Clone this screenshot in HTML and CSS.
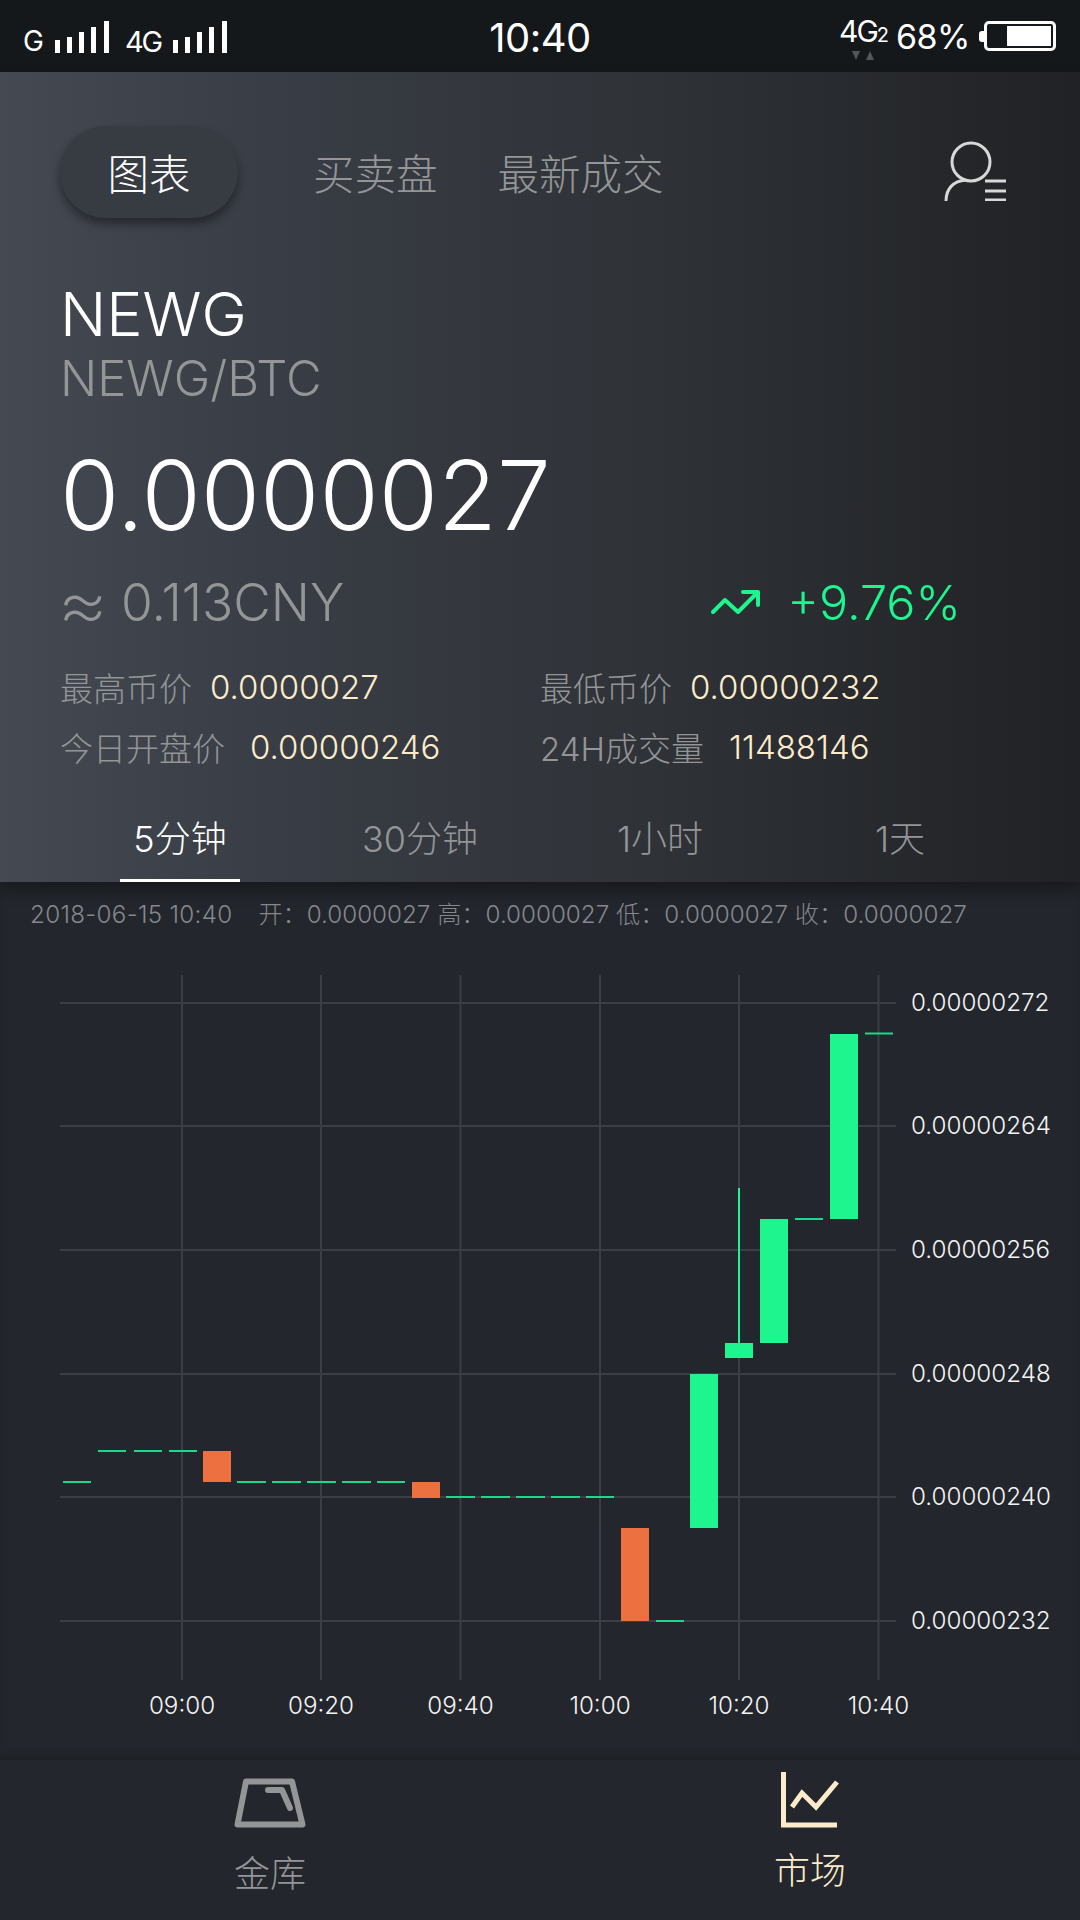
FILE: index.html
```html
<!DOCTYPE html>
<html lang="zh-CN">
<head>
    <meta charset="UTF-8">
    <meta name="viewport" content="width=device-width, initial-scale=1.0">
    <title>NEWG</title>
    <link rel="stylesheet" href="styles.css">
</head>
<body>
    <div class="status-bar">
        <div class="status-left">
            <span class="net">G</span>
            <svg class="signal" width="54" height="32" viewBox="0 0 54 32"><path d="M2.500 32V19M14.500 32V16M26.500 32V11M38.500 32V6M51.500 32V0"/></svg>
            <span class="net net-4g">4G</span>
            <svg class="signal" width="54" height="32" viewBox="0 0 54 32"><path d="M2.500 32V19M14.500 32V16M26.500 32V11M38.500 32V6M51.500 32V0"/></svg>
        </div>
        <div class="status-time">10:40</div>
        <div class="status-right">
            <div class="dual-sim">
                <span class="sim-text">4G<small>2</small></span>
                <svg class="sim-arrows" width="24" height="9" viewBox="0 0 24 9"><path d="M1 0h8l-4 9zM15 9l4-9 4 9z"/></svg>
            </div>
            <span class="battery-pct">68%</span>
            <span class="battery-tip"></span>
            <span class="battery"><span class="battery-fill"></span></span>
        </div>
    </div>

    <header class="market-head">
        <nav class="top-tabs">
            <a class="top-tab active">图表</a>
            <a class="top-tab">买卖盘</a>
            <a class="top-tab">最新成交</a>
            <svg class="user-icon" width="64" height="66" viewBox="0 0 64 66">
                <circle cx="29" cy="27" r="19"/>
                <path d="M4 66C4 54 11 46 24 45"/>
                <path class="user-lines" d="M43 46h21M43 56h21M43 65h21"/>
            </svg>
        </nav>

        <h1 class="coin">NEWG</h1>
        <div class="pair">NEWG/BTC</div>
        <div class="price">0.0000027</div>

        <div class="price-row">
            <div class="cny"><span class="approx">≈</span>0.113CNY</div>
            <div class="change">
                <svg class="trend" width="50" height="26" viewBox="0 0 50 26"><path d="M2 23L14 11l13 12L47 3M32 3h15v13"/></svg>
                <span>+9.76%</span>
            </div>
        </div>

        <div class="stats">
            <div class="stat"><span class="stat-label">最高币价</span><span class="stat-value">0.0000027</span></div>
            <div class="stat"><span class="stat-label">最低币价</span><span class="stat-value">0.00000232</span></div>
            <div class="stat stat-wide"><span class="stat-label">今日开盘价</span><span class="stat-value">0.00000246</span></div>
            <div class="stat stat-wide"><span class="stat-label">24H成交量</span><span class="stat-value">11488146</span></div>
        </div>

        <div class="range-tabs">
            <a class="range-tab active">5分钟</a>
            <a class="range-tab">30分钟</a>
            <a class="range-tab">1小时</a>
            <a class="range-tab">1天</a>
        </div>
    </header>

    <main class="chart-area">
        <div class="ohlc">
            <span class="ohlc-date">2018-06-15 10:40</span>
            <span>开：0.0000027 高：0.0000027 低：0.0000027 收：0.0000027</span>
        </div>
        <svg class="chart" width="1080" height="760" viewBox="0 960 1080 760">
            <!-- grid -->
            <path class="grid" d="M60 1003H896M60 1126H896M60 1250H896M60 1374H896M60 1497H896M60 1621H896"/>
            <path class="grid" d="M182 975V1680M321 975V1680M460.500 975V1680M600 975V1680M739 975V1680M878.500 975V1680"/>

            <!-- flat candles -->
            <path class="flat" d="M63 1482H91M98 1451H126M134 1451H162M169 1451H197M237 1482H266M272 1482H301M307 1482H336M342 1482H371M377 1482H405M446 1497H475M481 1497H510M516 1497H545M551 1497H580M586 1497H614M656 1621H684M795 1219H823M865 1033.500H893"/>
            <path class="wick" d="M739 1188V1344"/>

            <!-- candles -->
            <rect class="down" x="203" y="1451" width="28" height="31"/>
            <rect class="down" x="412" y="1482" width="28" height="16"/>
            <rect class="down" x="621" y="1528" width="28" height="93"/>
            <rect class="up" x="690" y="1374" width="28" height="154"/>
            <rect class="up" x="725" y="1343" width="28" height="15"/>
            <rect class="up" x="760" y="1219" width="28" height="124"/>
            <rect class="up" x="830" y="1034" width="28" height="185"/>

            <!-- price axis -->
            <text class="axis" x="911" y="1011">0.00000272</text>
            <text class="axis" x="911" y="1134">0.00000264</text>
            <text class="axis" x="911" y="1258">0.00000256</text>
            <text class="axis" x="911" y="1382">0.00000248</text>
            <text class="axis" x="911" y="1505">0.00000240</text>
            <text class="axis" x="911" y="1629">0.00000232</text>

            <!-- time axis -->
            <text class="axis mid" x="182" y="1714">09:00</text>
            <text class="axis mid" x="321" y="1714">09:20</text>
            <text class="axis mid" x="460.500" y="1714">09:40</text>
            <text class="axis mid" x="600" y="1714">10:00</text>
            <text class="axis mid" x="739" y="1714">10:20</text>
            <text class="axis mid" x="878.500" y="1714">10:40</text>
        </svg>
    </main>

    <footer class="bottom-nav">
        <a class="nav-item">
            <svg width="74" height="52" viewBox="0 0 74 52">
                <path d="M13 5.500H59L69.500 48.500H4.500Z"/>
                <path d="M35 14H49L57 32"/>
            </svg>
            <span>金库</span>
        </a>
        <a class="nav-item active">
            <svg width="58" height="56" viewBox="0 0 58 56">
                <path d="M2.500 0V53H56"/>
                <path d="M11 35L21 21L35 35L56 10"/>
            </svg>
            <span>市场</span>
        </a>
    </footer>
</body>
</html>
```
FILE: styles.css
```css
* {
    box-sizing: border-box;
}
html, body {
    margin: 0;
    padding: 0;
}
body {
    width: 1080px;
    height: 1920px;
    overflow: hidden;
    background-color: #23262c;
    font-family: Inter, "Noto Sans CJK SC", sans-serif;
    font-weight: 300;
    display: flex;
    flex-direction: column;
}

/* status bar */
.status-bar {
    height: 72px;
    background-color: #15181b;
    color: #fff;
    display: flex;
    align-items: center;
    justify-content: space-between;
    padding: 0 24px 0 23px;
    position: relative;
    font-weight: 400;
}
.status-left, .status-right {
    display: flex;
    align-items: center;
}
.net {
    font-size: 28px;
    margin-top: 10px;
    margin-right: 11px;
}
.net-4g {
    font-size: 29px;
    margin-left: 16px;
    margin-right: 12px;
    letter-spacing: -2px;
}
.signal {
    fill: none;
    stroke: #fff;
    stroke-width: 5;
    margin-top: 2px;
}
.status-time {
    position: absolute;
    left: 0;
    right: 0;
    text-align: center;
    font-size: 40px;
    letter-spacing: -0.5px;
    margin-top: 2px;
}
.dual-sim {
    display: flex;
    flex-direction: column;
    align-items: center;
    margin-right: 9px;
    margin-top: 4px;
}
.sim-text {
    font-size: 30px;
    line-height: 30px;
    letter-spacing: -2px;
}
.sim-text small {
    font-size: 20px;
}
.sim-arrows {
    fill: #555;
    margin-top: 1px;
}
.battery-pct {
    font-size: 34px;
    margin-right: 9px;
    letter-spacing: -0.5px;
}
.battery-tip {
    width: 5px;
    height: 11px;
    background-color: #fff;
    border-radius: 3px 0 0 3px;
}
.battery {
    width: 72px;
    height: 30px;
    border: 3px solid #fff;
    border-radius: 5px;
    display: flex;
    justify-content: flex-end;
    padding: 2px;
}
.battery-fill {
    width: 44px;
    background-color: #fff;
}

/* header */
.market-head {
    height: 810px;
    background: linear-gradient(90deg, #444952 0%, #393d45 25%, #2f3237 60%, #202225 100%);
    padding: 54px 60px 0 60px;
    position: relative;
    box-shadow: 0 8px 14px rgba(0, 0, 0, 0.35);
}
.top-tabs {
    display: flex;
    align-items: center;
    height: 92px;
}
.top-tab {
    font-size: 41.500px;
    color: #939597;
    margin-right: 60px;
}
.top-tab.active {
    width: 178px;
    height: 92px;
    border-radius: 46px;
    background-color: #373b42;
    color: #fff;
    display: flex;
    align-items: center;
    justify-content: center;
    box-shadow: 0 6px 10px rgba(0, 0, 0, 0.4);
    margin-right: 75px;
}
.user-icon {
    margin-left: auto;
    fill: none;
    stroke: #d8d8d8;
    stroke-width: 3;
    margin-bottom: 8px;
    margin-right: 14px;
}
.coin {
    font-size: 61px;
    font-weight: 300;
    color: #fff;
    margin: 60px 0 0 0;
    line-height: 72px;
}
.pair {
    font-size: 49px;
    color: #939597;
    line-height: 56px;
    margin-top: 1px;
}
.price {
    font-size: 96px;
    color: #fff;
    line-height: 116px;
    margin-top: 30px;
}
.price-row {
    display: flex;
    justify-content: space-between;
    align-items: center;
    margin-top: 19px;
    padding-right: 59px;
    height: 60px;
}
.cny {
    font-size: 51.500px;
    color: #939597;
    display: flex;
    align-items: center;
}
.approx {
    font-size: 80px;
    font-weight: 200;
    line-height: 60px;
    width: 64px;
    margin-left: -3px;
}
.change {
    display: flex;
    align-items: center;
    gap: 26px;
    font-size: 48.500px;
    color: #1ef58f;
}
.trend {
    fill: none;
    stroke: #1ef58f;
    stroke-width: 4;
    stroke-linecap: round;
    stroke-linejoin: round;
}
.stats {
    display: grid;
    grid-template-columns: 480px 1fr;
    margin-top: 24.500px;
}
.stat {
    height: 60px;
    display: flex;
    align-items: center;
    gap: 18px;
    font-size: 33px;
}
.stat-wide {
    gap: 25px;
}
.stat-label {
    color: #939597;
}
.stat-value {
    color: #fdeccb;
}
.range-tabs {
    position: absolute;
    left: 60px;
    right: 60px;
    bottom: 0;
    display: grid;
    grid-template-columns: repeat(4, 1fr);
}
.range-tab {
    font-size: 36px;
    color: #939597;
    text-align: center;
    height: 72px;
    position: relative;
}
.range-tab.active {
    color: #fff;
}
.range-tab.active::after {
    content: "";
    position: absolute;
    left: 60px;
    right: 60px;
    bottom: 0;
    height: 3px;
    background-color: #fff;
}

/* chart */
.chart-area {
    height: 878px;
    position: relative;
    box-shadow: inset 0 -8px 10px -6px rgba(0, 0, 0, 0.25);
}
.ohlc {
    font-size: 24.200px;
    color: #85888c;
    padding: 18px 0 0 30px;
    line-height: 30px;
    display: flex;
    gap: 26px;
}
.ohlc-date {
    letter-spacing: 0.3px;
}
.chart {
    display: block;
    margin-top: 30px;
}
.grid {
    fill: none;
    stroke: #3a3e45;
    stroke-width: 2;
}
.flat {
    fill: none;
    stroke: #1cd888;
    stroke-width: 2;
}
.wick {
    fill: none;
    stroke: #1ef58f;
    stroke-width: 2;
}
.up {
    fill: #1ef58f;
}
.down {
    fill: #ec7040;
}
.axis {
    fill: #f4f4f4;
    font-size: 24.200px;
}
.mid {
    text-anchor: middle;
}

/* bottom nav */
.bottom-nav {
    flex: 1;
    display: grid;
    grid-template-columns: 1fr 1fr;
    background-color: #23262c;
}
.nav-item {
    display: flex;
    flex-direction: column;
    align-items: center;
    justify-content: flex-end;
    padding-bottom: 23px;
    font-size: 36px;
    color: #939597;
}
.nav-item svg {
    fill: none;
    stroke: #939597;
    stroke-width: 6;
    stroke-linejoin: round;
    stroke-linecap: round;
    margin-bottom: 17px;
}
.nav-item.active {
    color: #fdeccb;
    padding-bottom: 26px;
}
.nav-item.active svg {
    stroke: #fdeccb;
    stroke-width: 5;
    stroke-linecap: butt;
    stroke-linejoin: miter;
    margin-bottom: 14px;
}
```
